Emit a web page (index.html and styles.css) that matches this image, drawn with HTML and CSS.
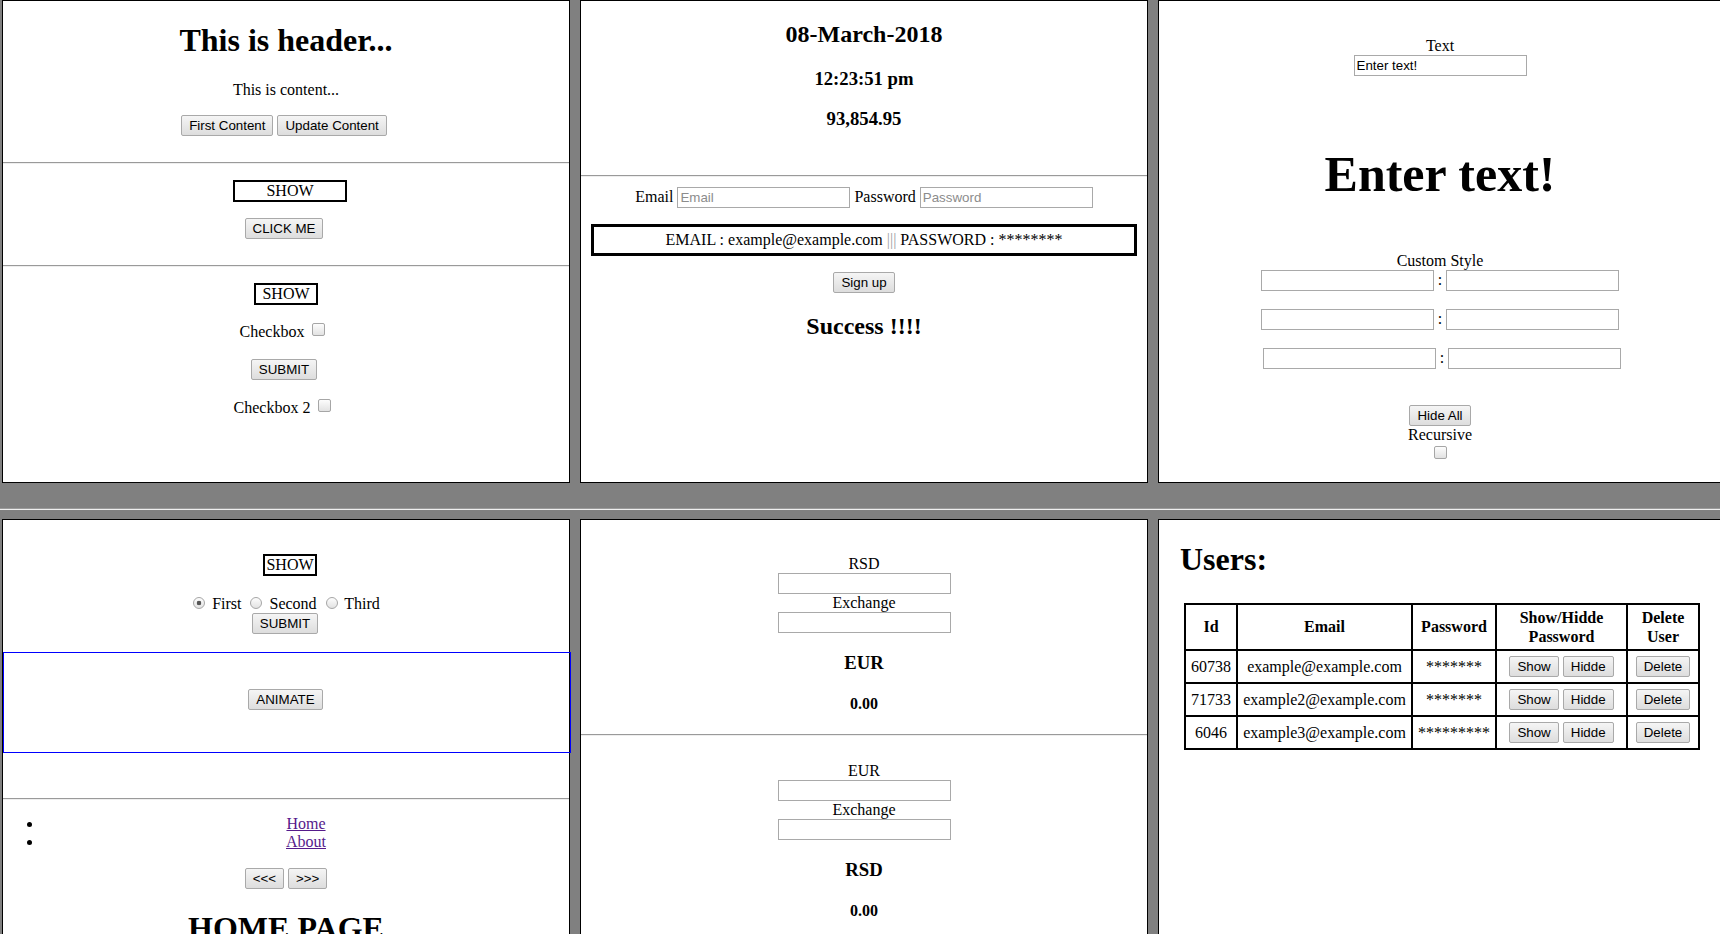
FILE: index.html
```html
<!DOCTYPE html>
<html>
<head>
<meta charset="utf-8">
<title>Demo</title>
<link rel="stylesheet" href="styles.css">
</head>
<body>
<div class="row row-top">
  <section class="panel">
    <h1 class="h1 p1-title">This is header...</h1>
    <p class="p1-text">This is content...</p>
    <div class="btn-row mt16 nudge"><button class="btn">First Content</button><button class="btn">Update Content</button></div>
    <hr class="rule mt26">
    <div class="show show1 mt16">SHOW</div>
    <div class="btn-row mt16 nudge"><button class="btn">CLICK ME</button></div>
    <hr class="rule mt26">
    <div class="show show2 mt16">SHOW</div>
    <div class="line mt18 nudge">Checkbox <input type="checkbox" class="chk"></div>
    <div class="btn-row mt18 nudge"><button class="btn">SUBMIT</button></div>
    <div class="line mt19 nudge">Checkbox 2 <input type="checkbox" class="chk"></div>
  </section>
  <section class="panel">
    <h2 class="h2 mt19">08-March-2018</h2>
    <h3 class="h3 mt20">12:23:51 pm</h3>
    <h3 class="h3 mt18">93,854.95</h3>
    <hr class="rule mt45">
    <div class="form-row mt10">
      <span>Email</span><input class="inp" placeholder="Email">
      <span>Password</span><input class="inp" placeholder="Password">
    </div>
    <div class="result">EMAIL : example@example.com <span class="sep-bars">|||</span> PASSWORD : ********</div>
    <div class="btn-row mt16"><button class="btn">Sign up</button></div>
    <h2 class="h2 mt19">Success !!!!</h2>
  </section>
  <section class="panel panel-text">
    <label class="field-label p3-label">Text</label>
    <input class="inp block-inp" value="Enter text!">
    <h1 class="big">Enter text!</h1>
    <div class="field-label p3-cs">Custom Style</div>
    <div class="pair"><input class="inp"><span class="colon">:</span><input class="inp"></div>
    <div class="pair mt18"><input class="inp"><span class="colon">:</span><input class="inp"></div>
    <div class="pair mt18 pair-shift"><input class="inp"><span class="colon">:</span><input class="inp"></div>
    <div class="btn-row mt36"><button class="btn">Hide All</button></div>
    <div class="field-label">Recursive</div>
    <div class="chk-row"><input type="checkbox" class="chk"></div>
  </section>
</div>
<hr class="sep">
<div class="row row-bottom">
  <section class="panel">
    <div class="show show3 mt34">SHOW</div>
    <div class="line mt18 nudge"><input type="radio" name="r" class="rad" checked> First <input type="radio" name="r" class="rad"> Second <input type="radio" name="r" class="rad"> Third</div>
    <div class="btn-row nudge-s"><button class="btn">SUBMIT</button></div>
    <div class="anim-box"><button class="btn">ANIMATE</button></div>
    <hr class="rule mt45">
    <ul class="links">
      <li><a href="#home">Home</a></li>
      <li><a href="#about">About</a></li>
    </ul>
    <div class="btn-row mt16"><button class="btn">&lt;&lt;&lt;</button><button class="btn">&gt;&gt;&gt;</button></div>
    <h1 class="h1 mt21">HOME PAGE</h1>
  </section>
  <section class="panel">
    <label class="field-label mt35">RSD</label>
    <input class="inp block-inp">
    <label class="field-label">Exchange</label>
    <input class="inp block-inp">
    <h3 class="h3 mt19">EUR</h3>
    <div class="amount mt21">0.00</div>
    <hr class="rule mt21">
    <label class="field-label mt26">EUR</label>
    <input class="inp block-inp">
    <label class="field-label">Exchange</label>
    <input class="inp block-inp">
    <h3 class="h3 mt19">RSD</h3>
    <div class="amount mt21">0.00</div>
  </section>
  <section class="panel panel-users">
    <h1 class="h1 users-title">Users:</h1>
    <table class="users">
      <thead>
        <tr>
          <th class="c-id">Id</th>
          <th class="c-email">Email</th>
          <th class="c-pass">Password</th>
          <th class="c-show">Show/Hidde<br>Password</th>
          <th class="c-del">Delete<br>User</th>
        </tr>
      </thead>
      <tbody>
        <tr>
          <td>60738</td><td>example@example.com</td><td>*******</td>
          <td><button class="btn">Show</button> <button class="btn">Hidde</button></td>
          <td><button class="btn">Delete</button></td>
        </tr>
        <tr>
          <td>71733</td><td>example2@example.com</td><td>*******</td>
          <td><button class="btn">Show</button> <button class="btn">Hidde</button></td>
          <td><button class="btn">Delete</button></td>
        </tr>
        <tr>
          <td>6046</td><td>example3@example.com</td><td>*********</td>
          <td><button class="btn">Show</button> <button class="btn">Hidde</button></td>
          <td><button class="btn">Delete</button></td>
        </tr>
      </tbody>
    </table>
  </section>
</div>
</body>
</html>
```
FILE: styles.css
```css
html, body {
  margin: 0;
  overflow: hidden;
}

body {
  background: #808080;
  font-family: "Liberation Serif", "Times New Roman", serif;
  font-size: 16px;
  line-height: 18px;
  color: #000;
}

.row {
  display: flex;
  gap: 10px;
  padding-left: 2px;
  width: max-content;
}

.panel {
  width: 566px;
  border: 1px solid #000;
  background: #fff;
  text-align: center;
}

.row-top .panel { height: 481px; }
.row-bottom .panel { height: 600px; }

.sep {
  margin: 25px 0 9px;
  border: 0;
  border-top: 1px solid #9a9a9a;
  border-bottom: 1px solid #eeeeee;
  height: 0;
}

.rule {
  margin: 0;
  border: 0;
  border-top: 1px solid #9a9a9a;
  border-bottom: 1px solid #eeeeee;
  height: 0;
}

/* spacing helpers */
.mt10 { margin-top: 10px; }
.mt16 { margin-top: 16px; }
.mt18 { margin-top: 18px; }
.mt19 { margin-top: 19px; }
.mt20 { margin-top: 20px; }
.mt21 { margin-top: 21px; }
.mt26 { margin-top: 26px; }
.mt34 { margin-top: 34px; }
.mt35 { margin-top: 35px; }
.mt36 { margin-top: 36px; }
.mt45 { margin-top: 45px; }

/* slight off-centre of some rows in the original */
.nudge { padding-right: 4px; }
.nudge-s { padding-right: 2px; }

/* headings */
h1, h2, h3 { margin-bottom: 0; }
.h1 {
  font-size: 32px;
  line-height: 37px;
  font-weight: bold;
}
.h2 {
  font-size: 24px;
  line-height: 28px;
  font-weight: bold;
}
.h3 {
  font-size: 18.72px;
  line-height: 22px;
  font-weight: bold;
}

.p1-title { margin-top: 21px; }
.p1-text { margin: 22px 0 0; }

.line { display: block; }

/* buttons */
.btn-row {
  display: flex;
  justify-content: center;
  gap: 4px;
}

.btn {
  font-family: "Liberation Sans", Arial, sans-serif;
  font-size: 13.333px;
  height: 21px;
  padding: 0 7px;
  margin: 0;
  border: 1px solid #a9a9a9;
  border-radius: 2px;
  background: linear-gradient(#f5f5f5, #dddddd);
  color: #000;
  box-sizing: border-box;
  vertical-align: middle;
}

/* bordered SHOW boxes */
.show {
  box-sizing: border-box;
  height: 22px;
  border: 2px solid #000;
  line-height: 18px;
  margin-left: auto;
  margin-right: auto;
}
.show1 { width: 114px; margin-left: 230px; }
.show2 { width: 64px; }
.show3 { width: 54px; margin-left: 260px; }

/* inputs */
.inp {
  font-family: "Liberation Sans", Arial, sans-serif;
  font-size: 13.333px;
  width: 173px;
  height: 21px;
  box-sizing: border-box;
  border: 1px solid #a9a9a9;
  padding: 1px 2px;
  margin: 0;
  background: #fff;
  color: #000;
}
.inp::placeholder { color: #8c8c8c; }
.block-inp {
  display: block;
  margin: 0 auto;
}

.chk {
  appearance: none;
  -webkit-appearance: none;
  width: 13px;
  height: 13px;
  box-sizing: border-box;
  border: 1px solid #a6a6a6;
  border-radius: 2px;
  background: linear-gradient(#fdfdfd, #e2e2e2);
  margin: 0 3px 0 4px;
  vertical-align: 1px;
}

.rad {
  appearance: none;
  -webkit-appearance: none;
  width: 12px;
  height: 12px;
  box-sizing: border-box;
  border: 1px solid #a6a6a6;
  border-radius: 50%;
  background: linear-gradient(#fdfdfd, #e2e2e2);
  margin: 3px 3px 0 5px;
  vertical-align: 0;
}
.rad:checked {
  background: radial-gradient(circle, #555 0 2px, transparent 2.6px), linear-gradient(#fdfdfd, #e2e2e2);
}

/* panel 2 */
.form-row {
  display: flex;
  justify-content: center;
  align-items: baseline;
  gap: 4px;
  height: 21px;
}

.result {
  box-sizing: border-box;
  height: 32px;
  border: 3px solid #000;
  margin: 16px 10px 0;
  line-height: 26px;
}
.sep-bars { color: #a0a0a0; }

/* panel 3 */
.panel-text {
  width: 562px;
  padding-right: 4px;
}
.field-label { display: block; }
.p3-label { margin-top: 36px; }
.big {
  font-size: 50px;
  line-height: 58px;
  font-weight: bold;
  margin: 69px 0 0;
}
.p3-cs { margin-top: 49px; }

.pair {
  display: flex;
  justify-content: center;
  align-items: baseline;
  height: 21px;
}
.colon { margin: 0 4px; }
.pair-shift { padding-left: 4px; }

.chk-row { margin-top: 2px; height: 13px; }
.chk-row .chk { display: block; margin: 0 auto; }

/* panel 4 */
.anim-box {
  box-sizing: border-box;
  width: 568px;
  height: 101px;
  margin-top: 18px;
  border: 1px solid #0000ff;
  padding: 36px 3px 0 0;
  display: flex;
  justify-content: center;
  align-items: flex-start;
}

.links {
  margin: 15px 0 0;
  padding-left: 40px;
  line-height: 18.4px;
}
.links a { color: #551a8b; }

/* panel 5 */
.amount { font-weight: bold; }

/* panel 6 */
.panel-users { text-align: left; }
.users-title { margin: 21px 0 0 21px; }

.users {
  border-collapse: collapse;
  border: 2px solid #000;
  margin: 25px auto 0;
}
.users th,
.users td {
  border: 2px solid #000;
  padding: 5px;
  text-align: center;
  vertical-align: middle;
}
.users th {
  line-height: 18.5px;
  padding: 4px 5px 3px;
}
.users td { line-height: 18px; white-space: nowrap; }
.users td .btn { vertical-align: top; }
.c-id { width: 40px; }
.c-email { width: 163px; }
.c-pass { width: 72px; }
.c-show { width: 119px; }
.c-del { width: 60px; }
```
